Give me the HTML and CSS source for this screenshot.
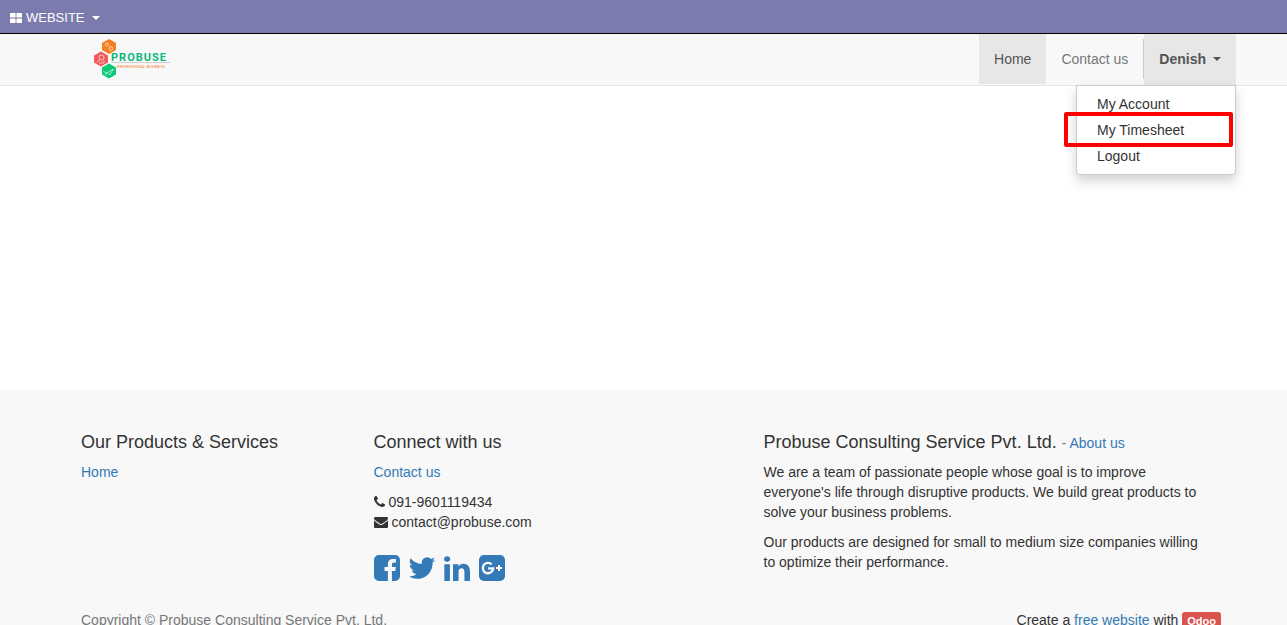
FILE: index.html
```html
<!DOCTYPE html>
<html lang="en">
<head>
<meta charset="utf-8">
<title>Probuse Consulting Service Pvt. Ltd.</title>
<link rel="stylesheet" href="styles.css">
</head>
<body>
<nav class="topbar">
  <button class="topbar-menu" type="button">
    <svg class="apps" viewBox="0 0 12 10" aria-hidden="true"><rect width="5.6" height="4.6" rx=".7"/><rect x="6.4" width="5.6" height="4.6" rx=".7"/><rect y="5.4" width="5.6" height="4.6" rx=".7"/><rect x="6.4" y="5.4" width="5.6" height="4.6" rx=".7"/></svg>
    <span>WEBSITE</span><span class="caret"></span>
  </button>
</nav>
<header class="navbar">
  <div class="container navbar-row">
    <a class="brand" href="#" aria-label="Probuse">
      <svg class="logo" viewBox="0 0 77 42">
        <path fill="#f47f20" d="M15 1l7 4v7l-7 4-7-4V5z"/>
        <path fill="#f05a5a" d="M7 13.500l7 4v7l-7 4-7-4v-7z"/>
        <path fill="#0bc878" d="M15 25.500l7 4v7l-7 4-7-4v-7z"/>
        <g fill="none" stroke="#fff" stroke-opacity=".65">
          <circle cx="13" cy="6.500" r="1.600"/><circle cx="17" cy="10.500" r="1.800"/>
          <circle cx="7.500" cy="19.500" r="2.500"/><path d="M5.800 21.500L3 24.500M9 22.500l2 2M5 25h5"/>
          <path d="M9.500 33.500l3 1.500 7-4-4 6-2-2M11 37l2-2"/>
        </g>
        <text class="logo-name" x="17" y="23">PROBUSE</text>
        <path d="M17 24.500h59" stroke="#cfcfcf"/>
        <text class="logo-tag" x="23" y="30">PROFESSIONAL BUSINESS</text>
      </svg>
    </a>
    <ul class="menu">
      <li><a class="menu-link active" href="#">Home</a></li>
      <li><a class="menu-link" href="#">Contact us</a></li>
      <li class="divider"></li>
      <li class="user">
        <button class="menu-link user-toggle" type="button"><span>Denish</span><span class="caret"></span></button>
        <ul class="dropdown">
          <li><a href="#">My Account</a></li>
          <li class="highlighted"><a href="#">My Timesheet</a></li>
          <li><a href="#">Logout</a></li>
        </ul>
      </li>
    </ul>
  </div>
</header>
<main class="content"></main>
<footer class="footer">
  <div class="container footer-columns">
    <section class="column">
      <h4>Our Products &amp; Services</h4>
      <p><a href="#">Home</a></p>
    </section>
    <section class="column">
      <h4>Connect with us</h4>
      <p><a href="#">Contact us</a></p>
      <p class="contact">
        <span class="line"><svg class="phone" viewBox="192 128 1408 1536" aria-hidden="true"><path d="M1600 1240q0 27-10 70.500t-21 68.500q-21 50-122 106-94 51-186 51-27 0-53-3.500t-57.500-12.500-47-14.500-55.500-20.500-49-18q-98-35-175-83-127-79-264-216t-216-264q-48-77-83-175-3-9-18-49t-20.500-55.500-14.500-47-12.500-57.500-3.500-53q0-92 51-186 56-101 106-122 25-11 68.500-21t70.500-10q14 0 21 3 18 6 53 76 11 19 30 54t35 63.500 31 53.500q3 4 17.500 25t21.500 35.500 7 28.500q0 20-28.500 50t-62 55-62 53-28.500 46q0 9 5 22.500t8.500 20.500 14 24 11.500 19q76 137 174 235t235 174q2 1 19 11.500t24 14 20.500 8.500 22.500 5q18 0 46-28.500t53-62 55-62 50-28.500q14 0 28.500 7t35.500 21.500 25 17.500q25 15 53.500 31t63.500 35 54 30q70 35 76 53 3 7 3 21z"/></svg><span>091-9601119434</span></span>
        <span class="line"><svg class="mail" viewBox="0 256 1792 1408" aria-hidden="true"><path d="M1792 710v794q0 66-47 113t-113 47h-1472q-66 0-113-47t-47-113v-794q44 49 101 87 362 246 497 345 57 42 92.500 65.500t94.500 48 110 24.500h2q51 0 110-24.500t94.500-48 92.500-65.500q170-123 498-345 57-39 100-87zm0-294q0 79-49 151t-122 123q-376 261-468 325-10 7-42.500 31t-54 38.500-52 32.500-57.500 27-50 9h-2q-23 0-50-9t-57.500-27-52-32.500-54-38.500-42.500-31q-91-64-262-182.500t-205-142.500q-62-42-117-115.500t-55-136.500q0-78 41.500-130t118.500-52h1472q65 0 112.500 47t47.500 113z"/></svg><span>contact@probuse.com</span></span>
      </p>
      <div class="social">
        <a href="#" aria-label="Facebook"><svg viewBox="128 128 1536 1536"><path d="M1376 128q119 0 203.500 84.500t84.500 203.500v960q0 119-84.500 203.500t-203.500 84.500h-188v-595h199l30-232h-229v-148q0-56 23.500-84t91.500-28l122-1v-207q-63-9-178-9-136 0-217.500 80t-81.500 226v171h-200v232h200v595h-532q-119 0-203.500-84.500t-84.500-203.500v-960q0-119 84.500-203.500t203.500-84.500h960z"/></svg></a>
        <a href="#" aria-label="Twitter"><svg viewBox="128 128 1536 1536"><path d="M1684 408q-67 98-162 167 1 14 1 42 0 130-38 259.500t-115.500 248.500-184.500 210.500-258 146-323 54.500q-271 0-496-145 35 4 78 4 225 0 401-138-105-2-188-64.500t-114-159.500q33 5 61 5 43 0 85-11-112-23-185.500-111.500t-73.500-205.500v-4q68 38 146 41-66-44-105-115t-39-154q0-88 44-163 121 149 294.500 238.500t371.500 99.500q-8-38-8-74 0-134 94.500-228.500t228.500-94.500q140 0 236 102 109-21 205-78-37 115-142 178 93-10 186-50z"/></svg></a>
        <a href="#" aria-label="LinkedIn"><svg viewBox="128 80 1536 1536"><path d="M477 625v991h-330v-991h330zm21-306q1 73-50.500 122t-135.500 49h-2q-82 0-132-49t-50-122q0-74 51.500-122.500t134.500-48.500 133 48.500 51 122.500zm1166 729v568h-329v-530q0-105-40.500-164.500t-126.500-59.500q-63 0-105.500 34.500t-63.500 85.500q-11 30-11 81v553h-329q2-399 2-647t-1-296l-1-48h329v144h-2q20-32 41-56t56.500-52 87-43.500 114.500-15.500q171 0 275 113.500t104 332.500z"/></svg></a>
        <a href="#" aria-label="Google Plus"><svg viewBox="0 0 26 26"><rect width="26" height="26" rx="5"/><path d="M12.600 9.300A5.200 5.200 0 1 0 14.200 13.400H9" fill="none" stroke="#f8f8f8" stroke-width="2.400"/><path d="M20 10v6M17 13h6" stroke="#f8f8f8" stroke-width="2"/></svg></a>
      </div>
    </section>
    <section class="column about">
      <h4>Probuse Consulting Service Pvt. Ltd. <small>- <a href="#">About us</a></small></h4>
      <p>We are a team of passionate people whose goal is to improve everyone's life through disruptive products. We build great products to solve your business problems.</p>
      <p>Our products are designed for small to medium size companies willing to optimize their performance.</p>
    </section>
  </div>
  <div class="container footer-bottom">
    <span class="copyright">Copyright © Probuse Consulting Service Pvt. Ltd.</span>
    <span>Create a <a href="#">free website</a> with <a class="badge" href="#">Odoo</a></span>
  </div>
</footer>
</body>
</html>
```
FILE: styles.css
```css
* { box-sizing: border-box; }
html { height: 100%; }
body {
  display: flex;
  flex-direction: column;
  height: 100%;
  margin: 0;
  overflow: hidden;
  font: 14px/20px "Liberation Sans", Arial, sans-serif;
  color: #333;
  background: #fff;
}
a { color: #337ab7; text-decoration: none; }
ul { margin: 0; padding: 0; list-style: none; }
button { border: 0; background: none; font: inherit; color: inherit; cursor: pointer; }
.container { padding: 0 51px 0 66px; }
.caret {
  border-top: 4px solid;
  border-left: 4px solid transparent;
  border-right: 4px solid transparent;
}

.topbar {
  display: flex;
  flex: none;
  height: 34px;
  background: #7c7bad;
  border-bottom: 1px solid #000;
}
.topbar-menu {
  display: flex;
  align-items: center;
  gap: 4px;
  padding: 2px 10px 0;
  font-size: 13px;
  color: #fff;
}
.topbar-menu .caret { margin-left: 3px; }
.apps { width: 12px; height: 10px; fill: #fff; }

.navbar { flex: none; background: #f8f8f8; border-bottom: 1px solid #e7e7e7; }
.navbar-row { display: flex; justify-content: space-between; height: 51px; }
.brand { padding: 4px 0 0 28px; }
.logo { display: block; width: 77px; height: 42px; }
.logo-name { font: bold 11px Roboto, sans-serif; letter-spacing: 1px; fill: #0bb878; }
.logo-tag { font: 4px Roboto, sans-serif; fill: #f47f20; }
.menu { display: flex; }
.menu-link { display: block; padding: 15px; color: #777; }
.menu-link.active { color: #555; background: #e7e7e7; }
.divider { width: 1px; height: 40px; margin-top: 5px; background: #ccc; }
.user { position: relative; }
.user-toggle {
  display: flex;
  align-items: center;
  gap: 7px;
  height: 51px;
  padding: 0 15px 2px;
  font-weight: bold;
  color: #555;
  background: #e7e7e7;
}
.dropdown {
  position: absolute;
  top: 51px;
  right: 0;
  width: 160px;
  padding: 5px 0;
  background: #fff;
  border: 1px solid #ccc;
  border-radius: 0 0 4px 4px;
  box-shadow: 0 6px 12px rgba(0, 0, 0, .18);
}
.dropdown a { display: block; padding: 3px 20px; color: #333; }
.highlighted { position: relative; }
.highlighted::after {
  content: "";
  position: absolute;
  inset: -5px 2px -4px -13px;
  border: 4px solid #f00;
  border-radius: 2px;
}

.content { flex: none; height: 304px; }
.footer { flex: 1 0 auto; background: #f8f8f8; }
.footer-columns { display: grid; grid-template-columns: 3fr 4fr 5fr; padding-top: 32px; }
.column { padding: 0 15px; }
.about { padding-right: 26px; }
h4 { margin: 10px 0; font-size: 18px; font-weight: normal; line-height: 20px; }
h4 small { font-size: 14px; line-height: 1; color: #777; }
p { margin: 0 0 10px; }
.line { display: flex; align-items: center; gap: 4px; }
.phone { width: 11px; height: 12px; fill: #333; }
.mail { width: 14px; height: 11px; fill: #333; }
.social { display: flex; gap: 9px; margin-top: 23px; }
.social svg { display: block; width: 26px; height: 26px; fill: #337ab7; }
.footer-bottom { display: flex; justify-content: space-between; margin-top: 28px; }
.footer-bottom > span { padding: 0 15px; }
.copyright { color: #777; }
.badge {
  display: inline-block;
  padding: 3px 5px;
  font-size: 11px;
  font-weight: bold;
  line-height: 12px;
  color: #fff;
  background: #d9534f;
  border-radius: 3px;
}
```
